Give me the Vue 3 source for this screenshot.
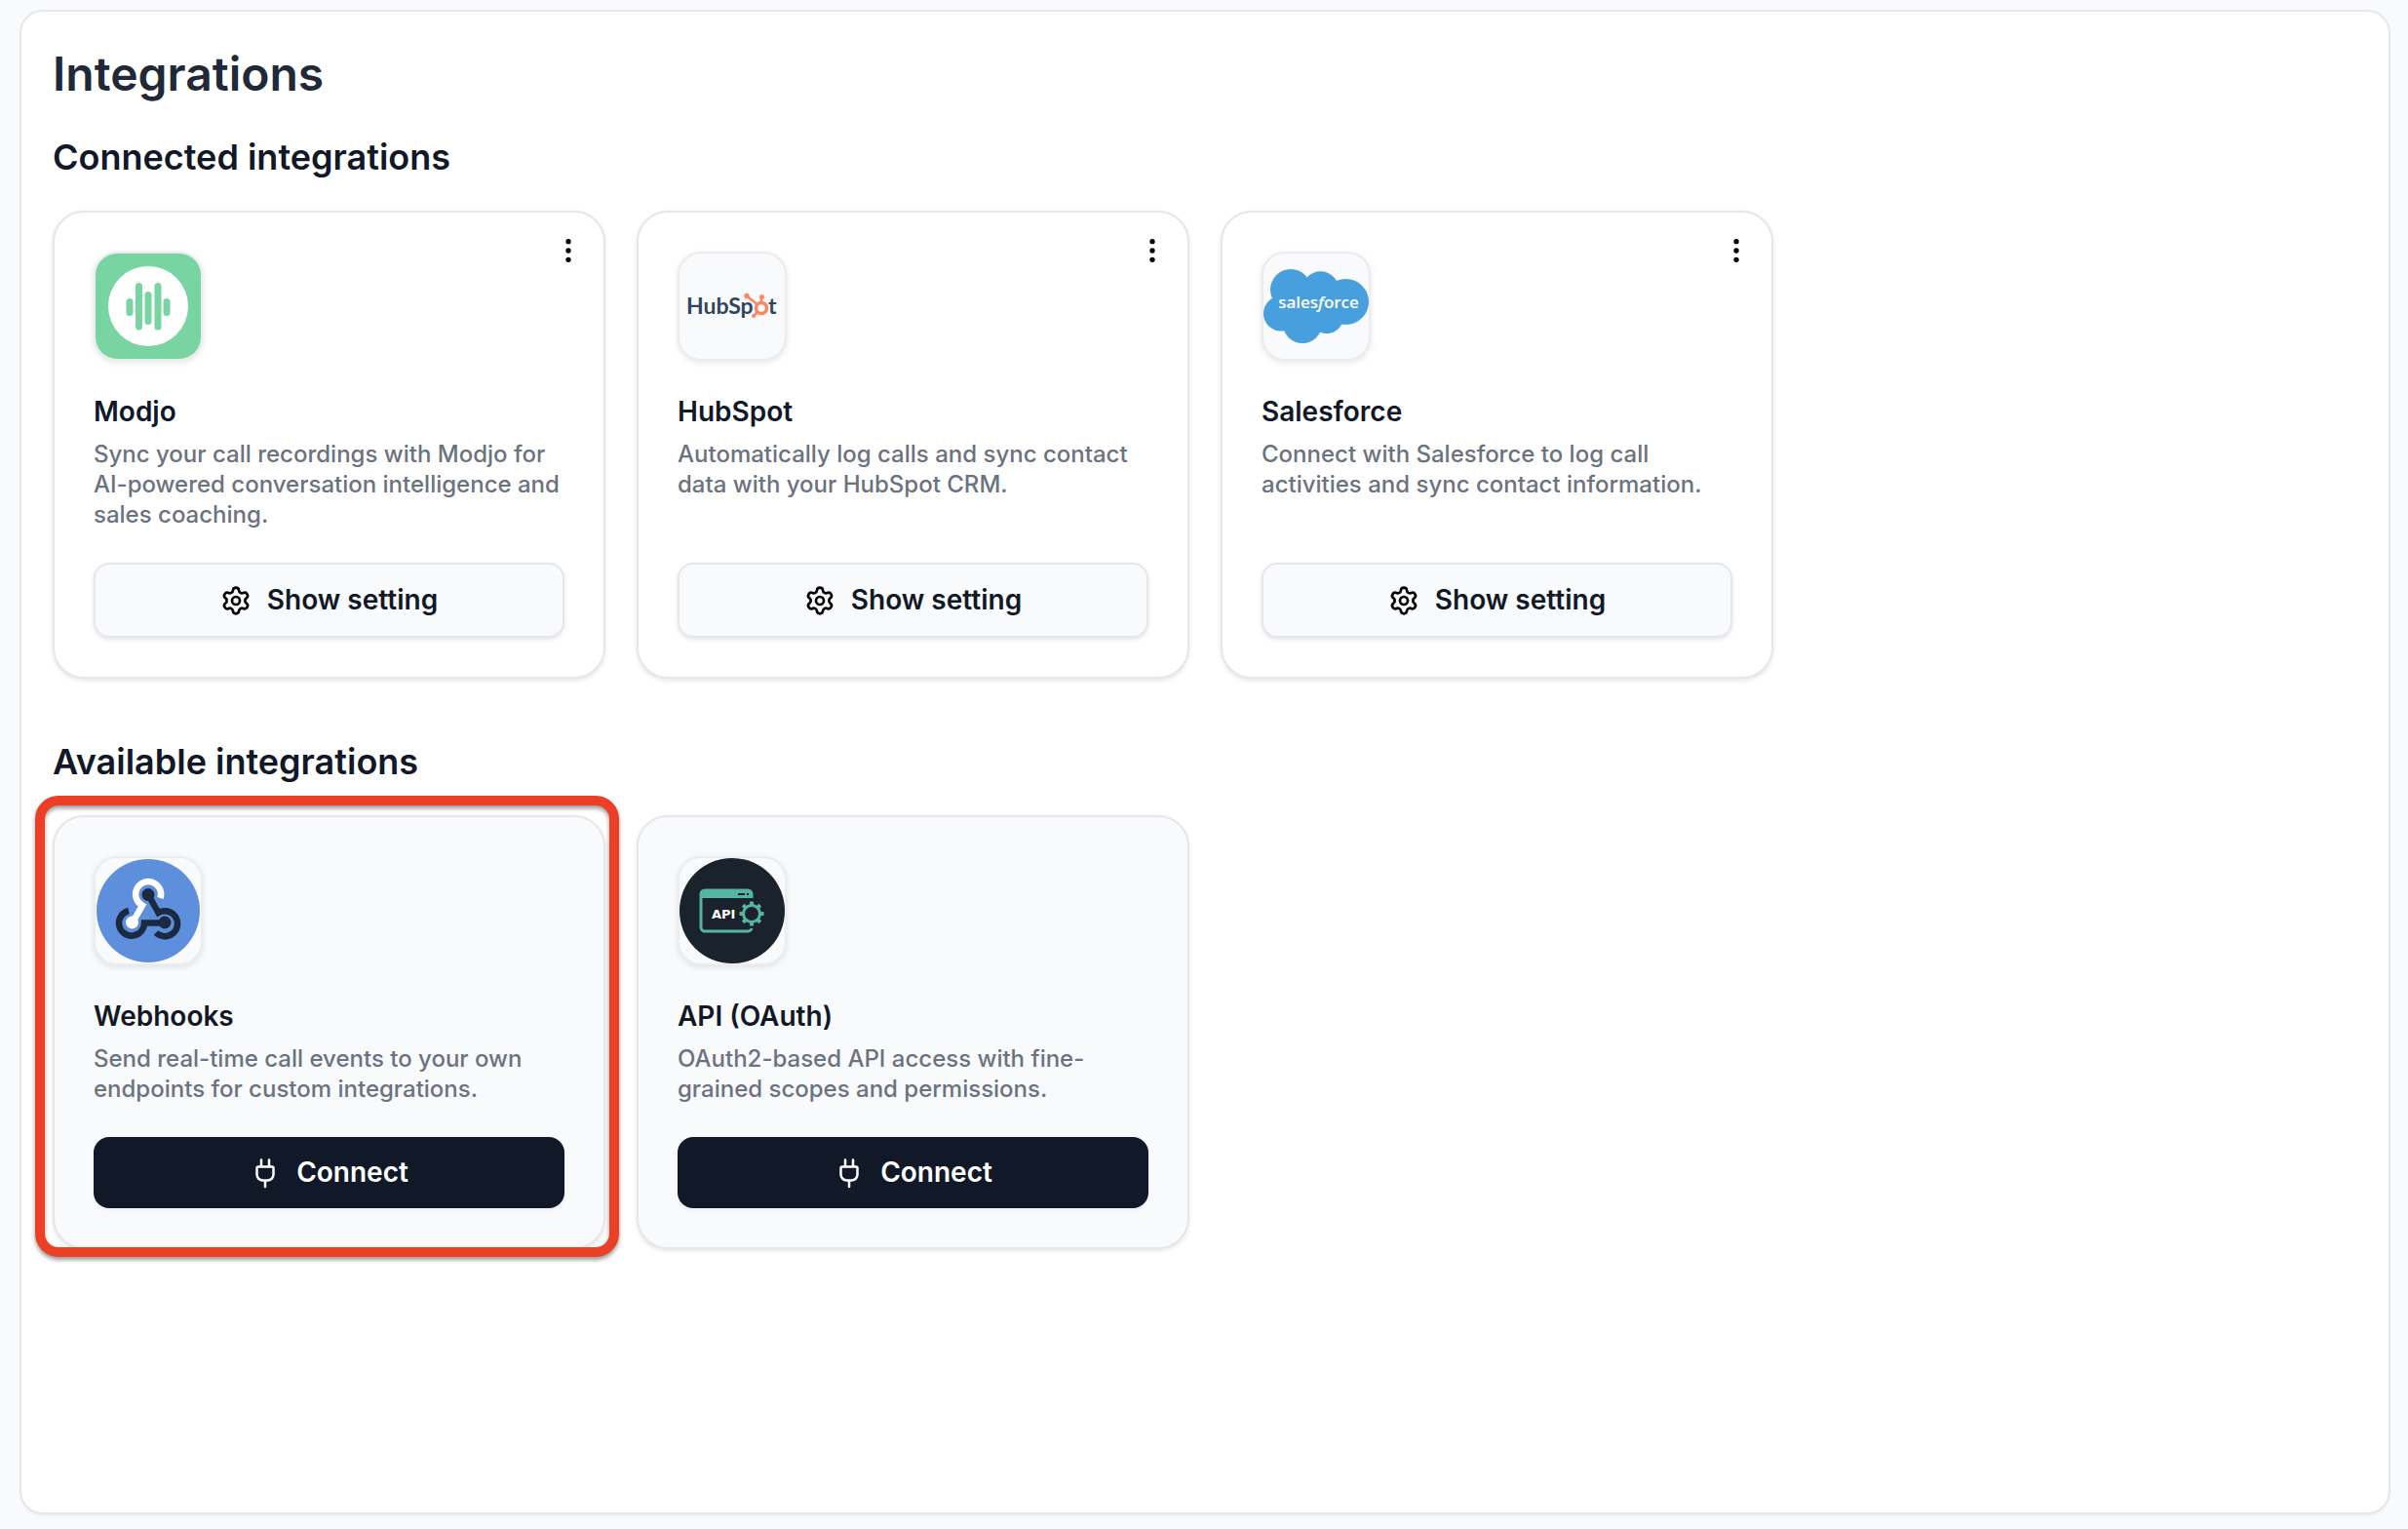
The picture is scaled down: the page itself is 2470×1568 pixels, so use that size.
<template>
  <main class="panel">
    <h1 class="page-title">Integrations</h1>

    <section class="section">
      <h2 class="section-title">Connected integrations</h2>
      <div class="grid">
        <article v-for="item in connected" :key="item.id" class="card">
          <button type="button" class="menu-button" :aria-label="`${item.name} options`">
            <svg viewBox="0 0 24 24" width="32" height="32" fill="currentColor">
              <circle cx="12" cy="5" r="2" />
              <circle cx="12" cy="12" r="2" />
              <circle cx="12" cy="19" r="2" />
            </svg>
          </button>

          <div class="logo">
            <svg v-if="item.id === 'modjo'" viewBox="0 0 108 108">
              <rect width="108" height="108" fill="#78d4a0" />
              <circle cx="54" cy="54" r="41" fill="#fff" />
              <path d="M35 49.5v11M44.5 33.5v41.5M54 42.5v27M64 33.5v41.5M73 49.5v11" stroke="#78d4a0" stroke-width="7" stroke-linecap="round" />
            </svg>

            <svg v-else-if="item.id === 'hubspot'" viewBox="0 0 108 108">
              <g class="hubspot-text" fill="#2e475d">
                <text x="7" y="62">HubSp</text>
                <text x="91" y="62">t</text>
              </g>
              <g fill="none" stroke="#ff8562">
                <circle cx="84" cy="56" r="5.5" stroke-width="3.5" />
                <path d="M69 43.5l10 8M84 45v5M80 60l-4 4" stroke-width="2.5" />
              </g>
              <g fill="#ff8562">
                <circle cx="69" cy="43.5" r="2.7" />
                <circle cx="84.5" cy="44.5" r="2.5" />
                <circle cx="76" cy="64" r="2" />
              </g>
            </svg>

            <svg v-else viewBox="0 0 108 108">
              <g fill="#479fdd">
                <circle cx="28" cy="37" r="21" />
                <circle cx="58.5" cy="37" r="18.7" />
                <circle cx="84.5" cy="49.5" r="23.5" />
                <circle cx="18" cy="61.5" r="18" />
                <circle cx="40" cy="72" r="20" />
                <circle cx="65" cy="65" r="17" />
                <path d="M20 36h54v30H20z" />
              </g>
              <text class="salesforce-text" x="56.5" y="56" text-anchor="middle" fill="#fff">sales<tspan font-style="italic">f</tspan>orce</text>
            </svg>
          </div>

          <h3 class="card-title">{{ item.name }}</h3>
          <p class="card-text">{{ item.text }}</p>

          <button type="button" class="button button-light">
            <svg viewBox="0 0 24 24" width="32" height="32" fill="none" stroke="#000" stroke-width="2" stroke-linecap="round" stroke-linejoin="round">
              <path d="M9.671 4.136a2.34 2.34 0 0 1 4.659 0 2.34 2.34 0 0 0 3.319 1.915 2.34 2.34 0 0 1 2.33 4.033 2.34 2.34 0 0 0 0 3.831 2.34 2.34 0 0 1-2.33 4.033 2.34 2.34 0 0 0-3.319 1.915 2.34 2.34 0 0 1-4.659 0 2.34 2.34 0 0 0-3.32-1.915 2.34 2.34 0 0 1-2.33-4.033 2.34 2.34 0 0 0 0-3.831A2.34 2.34 0 0 1 6.35 6.051a2.34 2.34 0 0 0 3.319-1.915" />
              <circle cx="12" cy="12" r="3" />
            </svg>
            Show setting
          </button>
        </article>
      </div>
    </section>

    <section class="section">
      <h2 class="section-title">Available integrations</h2>
      <div class="grid">
        <div v-for="item in available" :key="item.id" class="cell">
          <article class="card card-muted">
            <div class="logo">
              <svg v-if="item.id === 'webhooks'" viewBox="0 0 108 108">
                <circle cx="54" cy="54" r="53" fill="#5e8fdc" />
                <g fill="none" stroke-width="6.5">
                  <path d="M66.5 41A13 13 0 1 0 48 48.5L38 66" stroke="#fff" />
                  <path d="M54 37.5l10.5 18.5A13 13 0 1 1 62 76.5" stroke="#1b2a41" />
                  <path d="M34 54A13 13 0 1 0 50 66.5H70" stroke="#1b2a41" />
                </g>
                <circle cx="54" cy="37.5" r="6.5" fill="#1b2a41" />
                <circle cx="37.5" cy="66" r="6.5" fill="#fff" />
                <circle cx="71" cy="66" r="6.5" fill="#1b2a41" />
              </svg>

              <svg v-else viewBox="0 0 108 108">
                <circle cx="54" cy="54" r="54" fill="#1a222c" />
                <path d="M74 41v-4a4 4 0 0 0-4-4H26a4 4 0 0 0-4 4v34a4 4 0 0 0 4 4h44a4 4 0 0 0 4-3" fill="none" stroke="#56b5a1" stroke-width="3" />
                <path d="M22 41v-4a4 4 0 0 1 4-4h44a4 4 0 0 1 4 4v4z" fill="#56b5a1" />
                <path d="M60 37h7M69 37h2" stroke="#1a222c" stroke-width="2" />
                <circle cx="74" cy="57" r="13" fill="#1a222c" />
                <circle cx="74" cy="57" r="8.5" fill="none" stroke="#56b5a1" stroke-width="3" />
                <path d="M74 44.5v4M74 65.5v4M61.5 57h4M82.5 57h4M65.2 48.2l2.8 2.8M80 63l2.8 2.8M65.2 65.8l2.8-2.8M80 51l2.8-2.8" stroke="#56b5a1" stroke-width="4" />
                <text class="api-text" x="33" y="62" fill="#fff">API</text>
              </svg>
            </div>

            <h3 class="card-title">{{ item.name }}</h3>
            <p class="card-text">{{ item.text }}</p>

            <button type="button" class="button button-dark">
              <svg viewBox="0 0 32 32" width="32" height="32" fill="none" stroke="currentColor" stroke-width="2.5" stroke-linecap="round" stroke-linejoin="round">
                <path d="M12 9V2.5M20 9V2.5M16 30v-6.5M9 9.5h14a1.5 1.5 0 0 1 1.5 1.5v6.5a6 6 0 0 1-6 6h-5a6 6 0 0 1-6-6V11A1.5 1.5 0 0 1 9 9.5z" />
              </svg>
              Connect
            </button>
          </article>
          <div v-if="item.highlighted" class="highlight"></div>
        </div>
      </div>
    </section>
  </main>
</template>

<script setup>
const connected = [
  {
    id: 'modjo',
    name: 'Modjo',
    text: 'Sync your call recordings with Modjo for AI-powered conversation intelligence and sales coaching.'
  },
  {
    id: 'hubspot',
    name: 'HubSpot',
    text: 'Automatically log calls and sync contact data with your HubSpot CRM.'
  },
  {
    id: 'salesforce',
    name: 'Salesforce',
    text: 'Connect with Salesforce to log call activities and sync contact information.'
  }
];

const available = [
  {
    id: 'webhooks',
    name: 'Webhooks',
    text: 'Send real-time call events to your own endpoints for custom integrations.',
    highlighted: true
  },
  {
    id: 'api',
    name: 'API (OAuth)',
    text: 'OAuth2-based API access with fine-grained scopes and permissions.',
    highlighted: false
  }
];
</script>

<style>
body {
  background: #f9fafc;
}

#app {
  display: flex;
  min-height: 100vh;
}
</style>

<style scoped>
.panel {
  flex: 1;
  box-sizing: border-box;
  margin: 10px 18px 15px 20px;
  padding: 32px;
  border: 2px solid #e5e7eb;
  border-radius: 24px;
  background: #fff;
  box-shadow: 0 2px 2px rgba(0, 0, 0, 0.04);
  font-family: Inter, "Liberation Sans", sans-serif;
  color: #111827;
}

.page-title {
  margin: 0;
  font-size: 48px;
  line-height: 64px;
  font-weight: 600;
  color: #1f2937;
}

.section {
  margin-top: 32px;
}

.section + .section {
  margin-top: 64px;
}

.section-title {
  margin: 0 0 34px;
  font-size: 36px;
  line-height: 42px;
  font-weight: 600;
}

.grid {
  display: grid;
  grid-template-columns: repeat(4, 1fr);
  gap: 32px;
}

.cell {
  position: relative;
}

.card {
  position: relative;
  box-sizing: border-box;
  display: flex;
  flex-direction: column;
  height: 100%;
  padding: 40px;
  border: 2px solid #e5e7eb;
  border-radius: 32px;
  background: #fff;
  box-shadow: 0 2px 4px rgba(0, 0, 0, 0.1);
}

.card-muted {
  background: #f9fafc;
}

.menu-button {
  position: absolute;
  top: 23px;
  right: 20px;
  display: flex;
  padding: 0;
  border: 0;
  background: none;
  color: #000;
}

.logo {
  box-sizing: border-box;
  width: 112px;
  height: 112px;
  overflow: hidden;
  border: 2px solid #ececee;
  border-radius: 24px;
  background: #f9fafc;
  box-shadow: 0 2px 6px rgba(0, 0, 0, 0.1);
}

.logo svg {
  display: block;
  width: 100%;
  height: 100%;
}

.hubspot-text {
  font: 700 23px Lato, sans-serif;
}

.salesforce-text {
  font: 600 17px "Open Sans", sans-serif;
}

.api-text {
  font: 700 13px "DejaVu Sans", sans-serif;
}

.card-title {
  margin: 32px 0 8px;
  font-size: 28px;
  line-height: 40px;
  font-weight: 600;
}

.card-text {
  margin: 0 0 34px;
  font-size: 24px;
  line-height: 31px;
  font-weight: 500;
  color: #6b7280;
}

.button {
  display: flex;
  align-items: center;
  justify-content: center;
  gap: 16px;
  margin-top: auto;
  padding: 18px 32px;
  border: 0;
  border-radius: 16px;
  font: 600 28px/37px Inter, "Liberation Sans", sans-serif;
}

.button-light {
  border: 2px solid #e5e7eb;
  background: #f9fafc;
  color: #111827;
  box-shadow: 0 2px 4px rgba(0, 0, 0, 0.1);
}

.button-dark {
  background: #111827;
  color: #fff;
  box-shadow: 0 2px 4px rgba(0, 0, 0, 0.05);
}

.highlight {
  position: absolute;
  inset: -20px -14px -8px -18px;
  border: 10px solid #eb4026;
  border-radius: 24px;
  filter: drop-shadow(0 3px 2px rgba(0, 0, 0, 0.4));
  pointer-events: none;
}
</style>
